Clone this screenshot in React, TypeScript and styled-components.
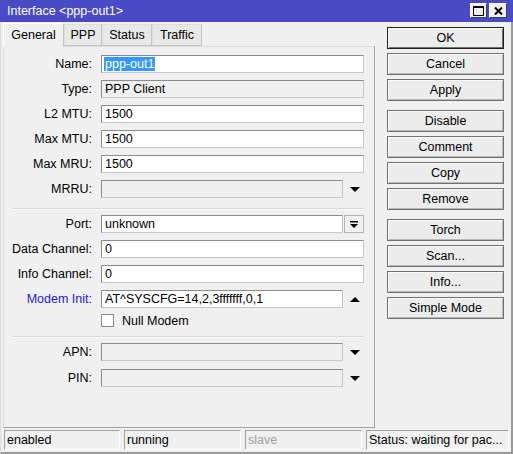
import React from "react";
import styled, { createGlobalStyle } from "styled-components";

const Global = createGlobalStyle`
  html, body { margin: 0; padding: 0; background: #f0f0f0; }
  body { font-family: "Liberation Sans", Arial, sans-serif; font-size: 12.5px; color: #000; }
  * { box-sizing: border-box; }
`;

const Window = styled.div`
  width: 513px;
  height: 454px;
  display: flex;
  flex-direction: column;
  background: #f0f0f0;
`;

const TitleBar = styled.div`
  height: 22px;
  flex: none;
  background: #4a4ac6;
  color: #fff;
  display: flex;
  align-items: center;
  justify-content: space-between;
  padding: 0 6px 0 7px;
  font-size: 12.5px;
`;

const TitleButtons = styled.div`
  display: flex;
  gap: 2px;
  margin-top: -1px;
`;

const TitleBtn = styled.div<{ $w: number }>`
  width: ${(p) => p.$w}px;
  height: 15px;
  background: #f0f0f0;
  border-top: 1px solid #fff;
  border-left: 1px solid #fff;
  border-right: 1px solid #404040;
  border-bottom: 1px solid #404040;
  display: flex;
  align-items: center;
  justify-content: center;
`;

const Frame = styled.div`
  flex: 1;
  display: flex;
  flex-direction: column;
  border-left: 1px solid #dcdcdc;
  border-right: 2px solid #9a9a9a;
  border-bottom: 2px solid #9a9a9a;
  padding: 1px 0 0 2px;
`;

const Main = styled.div`
  flex: 1;
  display: flex;
`;

const LeftCol = styled.div`
  width: 372px;
  display: flex;
  flex-direction: column;
`;

const TabRow = styled.div`
  display: flex;
  align-items: flex-end;
  height: 23px;
  position: relative;
  z-index: 1;
`;

const Tab = styled.div<{ $active?: boolean; $w: number }>`
  width: ${(p) => p.$w}px;
  height: ${(p) => (p.$active ? 24 : 22)}px;
  margin-bottom: ${(p) => (p.$active ? -1 : 0)}px;
  background: ${(p) => (p.$active ? "#f0f0f0" : "#e8e8e8")};
  border: 1px solid #c4c4c4;
  border-bottom: ${(p) => (p.$active ? "none" : "1px solid #c4c4c4")};
  border-left-color: ${(p) => (p.$active ? "#fff" : "#dedede")};
  border-top-color: ${(p) => (p.$active ? "#fff" : "#dedede")};
  display: flex;
  align-items: center;
  justify-content: center;
  padding-bottom: ${(p) => (p.$active ? 2 : 0)}px;
`;

const Panel = styled.div`
  flex: 1;
  border-top: 1px solid #dcdcdc;
  border-left: 1px solid #dcdcdc;
  border-right: 1px solid #a0a0a0;
  border-bottom: 1px solid #a0a0a0;
  padding: 8px 10px 0 0;
  display: flex;
  flex-direction: column;
`;

const Section = styled.div<{ $gap: number; $top: number }>`
  display: flex;
  flex-direction: column;
  gap: ${(p) => p.$gap}px;
  margin-top: ${(p) => p.$top}px;
`;

const Row = styled.div`
  display: flex;
  align-items: center;
  height: 18px;
`;

const Label = styled.div<{ $blue?: boolean }>`
  width: 88px;
  margin-right: 9px;
  text-align: right;
  white-space: nowrap;
  color: ${(p) => (p.$blue ? "#2020dc" : "#000")};
`;

const Field = styled.div<{ $disabled?: boolean }>`
  flex: 1;
  height: 18px;
  background: ${(p) => (p.$disabled ? "#f0f0f0" : "#fff")};
  border-top: 1px solid #8c8c8c;
  border-left: 1px solid #8c8c8c;
  border-right: 1px solid #c6c6c6;
  border-bottom: 1px solid #c6c6c6;
  padding-left: 3px;
  display: flex;
  align-items: center;
  white-space: nowrap;
  overflow: hidden;
`;

const Selected = styled.span`
  background: #3399ff;
  color: #fff;
  margin-left: -1px;
  padding: 0 1px;
  line-height: 14px;
`;

const Trailing = styled.div`
  width: 21px;
  height: 18px;
  flex: none;
  display: flex;
  align-items: center;
  justify-content: flex-end;
`;

const ArrowCell = styled.div`
  width: 21px;
  height: 18px;
  flex: none;
  display: flex;
  align-items: center;
  justify-content: center;
  padding-left: 2px;
`;

const DropBtn = styled.div`
  width: 20px;
  height: 18px;
  background: #f0f0f0;
  border: 1px solid #b4b4b4;
  display: flex;
  align-items: center;
  justify-content: center;
`;

const Separator = styled.div<{ $top: number }>`
  margin: ${(p) => p.$top}px 0 0 9px;
  height: 2px;
  border-top: 1px solid #d7d7d7;
  border-bottom: 1px solid #fbfbfb;
`;

const CheckRow = styled.label`
  display: flex;
  align-items: center;
  height: 13px;
  margin: 6px 0 0 97px;
  gap: 8px;
`;

const CheckBox = styled.span`
  width: 13px;
  height: 13px;
  background: #fff;
  border: 1px solid #8a8a8a;
`;

const RightCol = styled.div`
  width: 117px;
  margin-left: 12px;
  padding-top: 4px;
  display: flex;
  flex-direction: column;
`;

const ButtonGroup = styled.div<{ $top: number }>`
  display: flex;
  flex-direction: column;
  gap: 4px;
  margin-top: ${(p) => p.$top}px;
`;

const Button = styled.div<{ $default?: boolean }>`
  height: 22px;
  background: #ececec;
  border: 1px solid ${(p) => (p.$default ? "#1e1e1e" : "#707070")};
  box-shadow: inset 1px 1px 0 #fbfbfb, inset -1px -1px 0 ${(p) => (p.$default ? "#707070" : "#b8b8b8")};
  display: flex;
  align-items: center;
  justify-content: center;
`;

const StatusBar = styled.div`
  height: 20px;
  margin: 2px 0 2px 1px;
  display: flex;
  gap: 4px;
`;

const StatusCell = styled.div<{ $w: number; $muted?: boolean }>`
  width: ${(p) => p.$w}px;
  height: 20px;
  border-top: 1px solid #a0a0a0;
  border-left: 1px solid #a0a0a0;
  border-right: 1px solid #fff;
  border-bottom: 1px solid #fff;
  padding-left: 2px;
  display: flex;
  align-items: center;
  white-space: nowrap;
  overflow: hidden;
  color: ${(p) => (p.$muted ? "#a0a0a0" : "#000")};
`;

const Down = () => (
  <svg width="10" height="5" viewBox="0 0 10 5">
    <polygon points="0,0 10,0 5,5" fill="#000" />
  </svg>
);

const Up = () => (
  <svg width="10" height="5" viewBox="0 0 10 5">
    <polygon points="0,5 10,5 5,0" fill="#000" />
  </svg>
);

const BarDown = () => (
  <svg width="8" height="7" viewBox="0 0 8 7">
    <rect x="0" y="0" width="8" height="1.5" fill="#000" />
    <polygon points="0,3 8,3 4,7" fill="#000" />
  </svg>
);

type FieldRow = { label: string; value?: string; disabled?: boolean; arrow?: "down" | "up"; blue?: boolean };

const FormRow: React.FC<FieldRow> = ({ label, value, disabled, arrow, blue }) => (
  <Row>
    <Label $blue={blue}>{label}</Label>
    <Field $disabled={disabled}>{value}</Field>
    {arrow && <ArrowCell>{arrow === "down" ? <Down /> : <Up />}</ArrowCell>}
  </Row>
);

export default function App() {
  return (
    <>
      <Global />
      <Window>
        <TitleBar>
          <span>Interface &lt;ppp-out1&gt;</span>
          <TitleButtons>
            <TitleBtn $w={17}>
              <svg width="11" height="10" viewBox="0 0 11 10">
                <rect x="0.5" y="0.5" width="10" height="9" fill="none" stroke="#000" />
                <rect x="0" y="0" width="11" height="2" fill="#000" />
              </svg>
            </TitleBtn>
            <TitleBtn $w={18}>
              <svg width="9" height="8" viewBox="0 0 9 8">
                <path d="M1 0.5 L8 7.5 M8 0.5 L1 7.5" stroke="#000" strokeWidth="2" />
              </svg>
            </TitleBtn>
          </TitleButtons>
        </TitleBar>
        <Frame>
          <Main>
            <LeftCol>
              <TabRow>
                <Tab $active $w={61}>General</Tab>
                <Tab $w={38}>PPP</Tab>
                <Tab $w={50}>Status</Tab>
                <Tab $w={50}>Traffic</Tab>
              </TabRow>
              <Panel>
                <Section $gap={7} $top={0}>
                  <Row>
                    <Label>Name:</Label>
                    <Field>
                      <Selected>ppp-out1</Selected>
                    </Field>
                  </Row>
                  <FormRow label="Type:" value="PPP Client" disabled />
                  <FormRow label="L2 MTU:" value="1500" />
                  <FormRow label="Max MTU:" value="1500" />
                  <FormRow label="Max MRU:" value="1500" />
                  <FormRow label="MRRU:" disabled arrow="down" />
                </Section>
                <Separator $top={10} />
                <Section $gap={7} $top={5}>
                  <Row>
                    <Label>Port:</Label>
                    <Field>unknown</Field>
                    <Trailing>
                      <DropBtn>
                        <BarDown />
                      </DropBtn>
                    </Trailing>
                  </Row>
                  <FormRow label="Data Channel:" value="0" />
                  <FormRow label="Info Channel:" value="0" />
                  <FormRow label="Modem Init:" value="AT^SYSCFG=14,2,3fffffff,0,1" arrow="up" blue />
                </Section>
                <CheckRow>
                  <CheckBox />
                  <span>Null Modem</span>
                </CheckRow>
                <Separator $top={9} />
                <Section $gap={8} $top={5}>
                  <FormRow label="APN:" disabled arrow="down" />
                  <FormRow label="PIN:" disabled arrow="down" />
                </Section>
              </Panel>
            </LeftCol>
            <RightCol>
              <ButtonGroup $top={0}>
                <Button $default>OK</Button>
                <Button>Cancel</Button>
                <Button>Apply</Button>
              </ButtonGroup>
              <ButtonGroup $top={9}>
                <Button>Disable</Button>
                <Button>Comment</Button>
                <Button>Copy</Button>
                <Button>Remove</Button>
              </ButtonGroup>
              <ButtonGroup $top={9}>
                <Button>Torch</Button>
                <Button>Scan...</Button>
                <Button>Info...</Button>
                <Button>Simple Mode</Button>
              </ButtonGroup>
            </RightCol>
          </Main>
          <StatusBar>
            <StatusCell $w={116}>enabled</StatusCell>
            <StatusCell $w={117}>running</StatusCell>
            <StatusCell $w={117} $muted>slave</StatusCell>
            <StatusCell $w={143}>Status: waiting for pac...</StatusCell>
          </StatusBar>
        </Frame>
      </Window>
    </>
  );
}
